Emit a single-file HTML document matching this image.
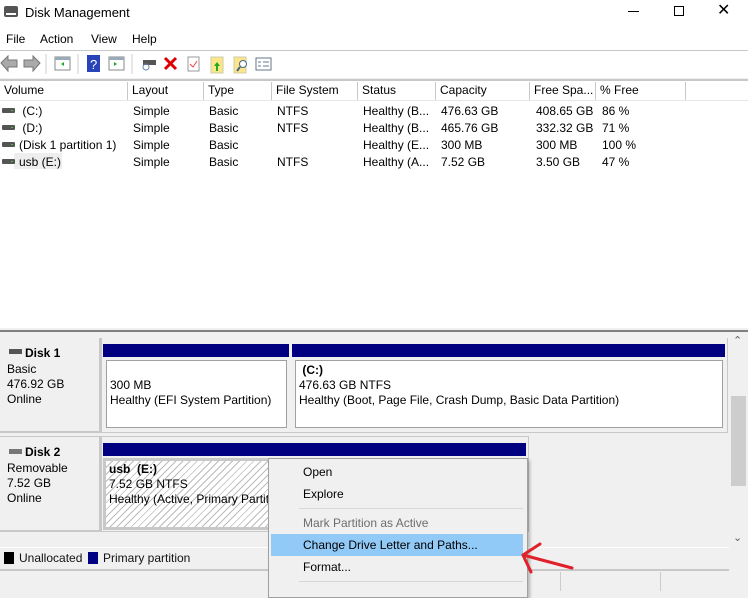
<!DOCTYPE html>
<html><head><meta charset="utf-8"><style>
*{margin:0;padding:0;box-sizing:border-box}
body{width:748px;height:591px;overflow:hidden;background:#f0f0f0;font-family:"Liberation Sans",sans-serif;font-size:12px;color:#000;position:relative}
.a{position:absolute;white-space:nowrap}
.hd{position:absolute;top:82px;height:18px;border-right:1px solid #c8c8c8;padding-left:4px;line-height:17px;background:#fff}
.dr{display:inline-block;width:13px;height:5px;background:#555;border-radius:1px;position:relative;top:-2px;margin-right:4px}
.dr:after{content:"";position:absolute;right:2px;top:2px;width:2px;height:1px;background:#3c3}
.blue{position:absolute;background:#000080}
.wb{position:absolute;background:#fff;border:1px solid #a0a0a0}
.mi{position:absolute;left:303px;font-size:12px}
</style></head><body>
<!-- title -->
<div class="a" style="left:0;top:0;width:748px;height:50px;background:#fff"></div>
<div class="a" style="left:4px;top:6px;width:14px;height:11px;background:#555;border-radius:2px"></div>
<div class="a" style="left:6px;top:13px;width:10px;height:2px;background:#fff"></div>
<div class="a" style="left:25px;top:5px;font-size:13px">Disk Management</div>
<div class="a" style="left:628px;top:11px;width:11px;height:1px;background:#000"></div>
<div class="a" style="left:674px;top:6px;width:10px;height:10px;border:1px solid #000"></div>
<div class="a" style="left:717px;top:0px;font-size:16px;font-weight:100">✕</div>
<div class="a" style="left:6px;top:32px">File</div>
<div class="a" style="left:40px;top:32px">Action</div>
<div class="a" style="left:91px;top:32px">View</div>
<div class="a" style="left:132px;top:32px">Help</div>
<!-- toolbar -->
<div class="a" style="left:0;top:50px;width:748px;height:28px;background:#fff;border-top:1px solid #c8c8c8"></div>
<svg class="a" style="left:0;top:52px" width="280" height="24">
<path d="M1 11 L8 4 L8 8 L17 8 L17 15 L8 15 L8 19Z" fill="#aaa" stroke="#777"/>
<path d="M40 11 L33 4 L33 8 L24 8 L24 15 L33 15 L33 19Z" fill="#aaa" stroke="#777"/>
<line x1="46" y1="2" x2="46" y2="22" stroke="#ccc"/>
<rect x="55" y="5" width="15" height="13" fill="#fff" stroke="#888"/><rect x="55" y="5" width="15" height="3" fill="#9ab"/><path d="M64 10 L61 12 L64 14Z" fill="#2a2"/>
<line x1="78" y1="2" x2="78" y2="22" stroke="#ccc"/>
<rect x="87" y="3" width="13" height="17" fill="#2844b8"/><text x="90" y="17" fill="#fff" font-size="13" font-family="Liberation Sans">?</text>
<rect x="109" y="5" width="15" height="13" fill="#fff" stroke="#888"/><rect x="109" y="5" width="15" height="3" fill="#9ab"/><path d="M114 10 L117 12 L114 14Z" fill="#2a2"/>
<line x1="132" y1="2" x2="132" y2="22" stroke="#ccc"/>
<rect x="143" y="8" width="13" height="5" fill="#555"/><circle cx="146" cy="15" r="3" fill="none" stroke="#68a"/>
<path d="M165 6 L176 17 M176 6 L165 17" stroke="#d00" stroke-width="3"/>
<rect x="188" y="5" width="11" height="14" fill="#fff" stroke="#999"/><path d="M190 12 L193 15 L197 9" stroke="#e44" fill="none"/>
<rect x="211" y="5" width="12" height="16" fill="#fde68a" stroke="#cca"/><path d="M217 10 L214 14 L220 14Z M216 14h2v5h-2z" fill="#2a2"/>
<rect x="234" y="5" width="12" height="16" fill="#fde68a" stroke="#cca"/><circle cx="243" cy="12" r="3.5" fill="#fff" stroke="#468"/><line x1="240" y1="15" x2="237" y2="19" stroke="#468" stroke-width="2"/>
<rect x="256" y="6" width="15" height="12" fill="#fff" stroke="#678"/><path d="M258 10h3M263 10h6M258 14h3M263 14h6" stroke="#678"/>
</svg>
<!-- list -->
<div class="a" style="left:0;top:79px;width:748px;height:249px;background:#fff;border-top:2px solid #c8c8c8"></div>
<div class="hd" style="left:0;width:128px">Volume</div>
<div class="hd" style="left:128px;width:76px">Layout</div>
<div class="hd" style="left:204px;width:68px">Type</div>
<div class="hd" style="left:272px;width:86px">File System</div>
<div class="hd" style="left:358px;width:78px">Status</div>
<div class="hd" style="left:436px;width:94px">Capacity</div>
<div class="hd" style="left:530px;width:66px">Free Spa...</div>
<div class="hd" style="left:596px;width:90px">% Free</div>
<div class="a" style="left:0;top:100px;width:748px;height:1px;background:#e6e6e6"></div>
<div class="a" style="left:14px;top:153px;width:48px;height:16px;background:#eee"></div>
<div class="a" style="left:2px;top:103px;line-height:17px"><span class="dr"></span> (C:)<br><span class="dr"></span> (D:)<br><span class="dr"></span>(Disk 1 partition 1)<br><span class="dr"></span>usb (E:)</div>
<div class="a" style="left:133px;top:103px;line-height:17px">Simple<br>Simple<br>Simple<br>Simple</div>
<div class="a" style="left:209px;top:103px;line-height:17px">Basic<br>Basic<br>Basic<br>Basic</div>
<div class="a" style="left:277px;top:103px;line-height:17px">NTFS<br>NTFS<br>&nbsp;<br>NTFS</div>
<div class="a" style="left:363px;top:103px;line-height:17px">Healthy (B...<br>Healthy (B...<br>Healthy (E...<br>Healthy (A...</div>
<div class="a" style="left:441px;top:103px;line-height:17px">476.63 GB<br>465.76 GB<br>300 MB<br>7.52 GB</div>
<div class="a" style="left:536px;top:103px;line-height:17px">408.65 GB<br>332.32 GB<br>300 MB<br>3.50 GB</div>
<div class="a" style="left:602px;top:103px;line-height:17px">86 %<br>71 %<br>100 %<br>47 %</div>
<!-- splitter -->
<div class="a" style="left:0;top:328px;width:748px;height:4px;border-bottom:2px solid #808080;background:#f0f0f0"></div>
<!-- scrollbar -->
<div class="a" style="left:729px;top:333px;width:18px;height:215px;background:#f0f0f0"></div>
<div class="a" style="left:731px;top:396px;width:15px;height:90px;background:#cdcdcd"></div>
<div class="a" style="left:733px;top:334px;font-size:11px;color:#606060">⌃</div>
<div class="a" style="left:733px;top:531px;font-size:11px;color:#606060">⌄</div>
<!-- disk 1 -->
<div class="a" style="left:0;top:338px;width:101px;height:95px;border-right:2px solid #c8c8c8;border-bottom:2px solid #c8c8c8"></div>
<div class="a" style="left:101px;top:338px;width:627px;height:95px;border:1px solid #c8c8c8;border-top:0"></div>
<div class="a" style="left:9px;top:349px;width:13px;height:5px;background:#555"></div>
<div class="a" style="left:25px;top:346px;font-weight:bold">Disk 1</div>
<div class="a" style="left:7px;top:362px;line-height:15px">Basic<br>476.92 GB<br>Online</div>
<div class="blue" style="left:103px;top:344px;width:186px;height:13px"></div>
<div class="blue" style="left:292px;top:344px;width:433px;height:13px"></div>
<div class="wb" style="left:106px;top:360px;width:181px;height:68px"></div>
<div class="wb" style="left:295px;top:360px;width:428px;height:68px"></div>
<div class="a" style="left:110px;top:378px;line-height:15px">300 MB<br>Healthy (EFI System Partition)</div>
<div class="a" style="left:299px;top:363px;line-height:15px"><b>&nbsp;(C:)</b><br>476.63 GB NTFS<br>Healthy (Boot, Page File, Crash Dump, Basic Data Partition)</div>
<!-- disk 2 -->
<div class="a" style="left:0;top:436px;width:101px;height:96px;border-right:2px solid #c8c8c8;border-bottom:2px solid #c8c8c8;border-top:1px solid #c8c8c8"></div>
<div class="a" style="left:101px;top:436px;width:428px;height:96px;border:1px solid #c8c8c8"></div>
<div class="a" style="left:9px;top:449px;width:13px;height:5px;background:#777"></div>
<div class="a" style="left:25px;top:445px;font-weight:bold">Disk 2</div>
<div class="a" style="left:7px;top:461px;line-height:15px">Removable<br>7.52 GB<br>Online</div>
<div class="blue" style="left:103px;top:443px;width:423px;height:13px"></div>
<div class="a" style="left:103px;top:458px;width:423px;height:72px;border:3px solid #c8c8c8;background:repeating-linear-gradient(135deg,#fff 0 4px,#bbb 4px 5px)"></div>
<div class="a" style="left:109px;top:462px;line-height:15px"><b>usb&nbsp; (E:)</b><br>7.52 GB NTFS<br>Healthy (Active, Primary Partit</div>
<!-- legend -->
<div class="a" style="left:0;top:547px;width:729px;height:24px;border-top:1px solid #fff;border-bottom:2px solid #c8c8c8"></div>
<div class="a" style="left:4px;top:552px;width:10px;height:12px;background:#000"></div>
<div class="a" style="left:19px;top:551px;color:#111">Unallocated</div>
<div class="a" style="left:88px;top:552px;width:10px;height:12px;background:#000080"></div>
<div class="a" style="left:103px;top:551px;color:#111">Primary partition</div>
<div class="a" style="left:560px;top:572px;width:1px;height:19px;background:#ccc"></div>
<div class="a" style="left:660px;top:572px;width:1px;height:19px;background:#ccc"></div>
<!-- context menu -->
<div class="a" style="left:268px;top:458px;width:260px;height:140px;background:#f0f0f0;border:1px solid #a0a0a0;box-shadow:2px 2px 3px rgba(0,0,0,.25)"></div>
<div class="mi" style="top:465px">Open</div>
<div class="mi" style="top:487px">Explore</div>
<div class="a" style="left:299px;top:508px;width:224px;height:1px;background:#d7d7d7"></div>
<div class="mi" style="top:516px;color:#6d6d6d">Mark Partition as Active</div>
<div class="a" style="left:271px;top:534px;width:252px;height:22px;background:#91c9f7"></div>
<div class="mi" style="top:538px">Change Drive Letter and Paths...</div>
<div class="mi" style="top:560px">Format...</div>
<div class="a" style="left:299px;top:581px;width:224px;height:1px;background:#d7d7d7"></div>
<!-- arrow -->
<svg class="a" style="left:515px;top:538px" width="70" height="40"><path d="M8 17 L57 30 M8 17 L25 6 M8 17 L16 34" stroke="#e0202a" stroke-width="3" fill="none" stroke-linecap="round"/></svg>
</body></html>
